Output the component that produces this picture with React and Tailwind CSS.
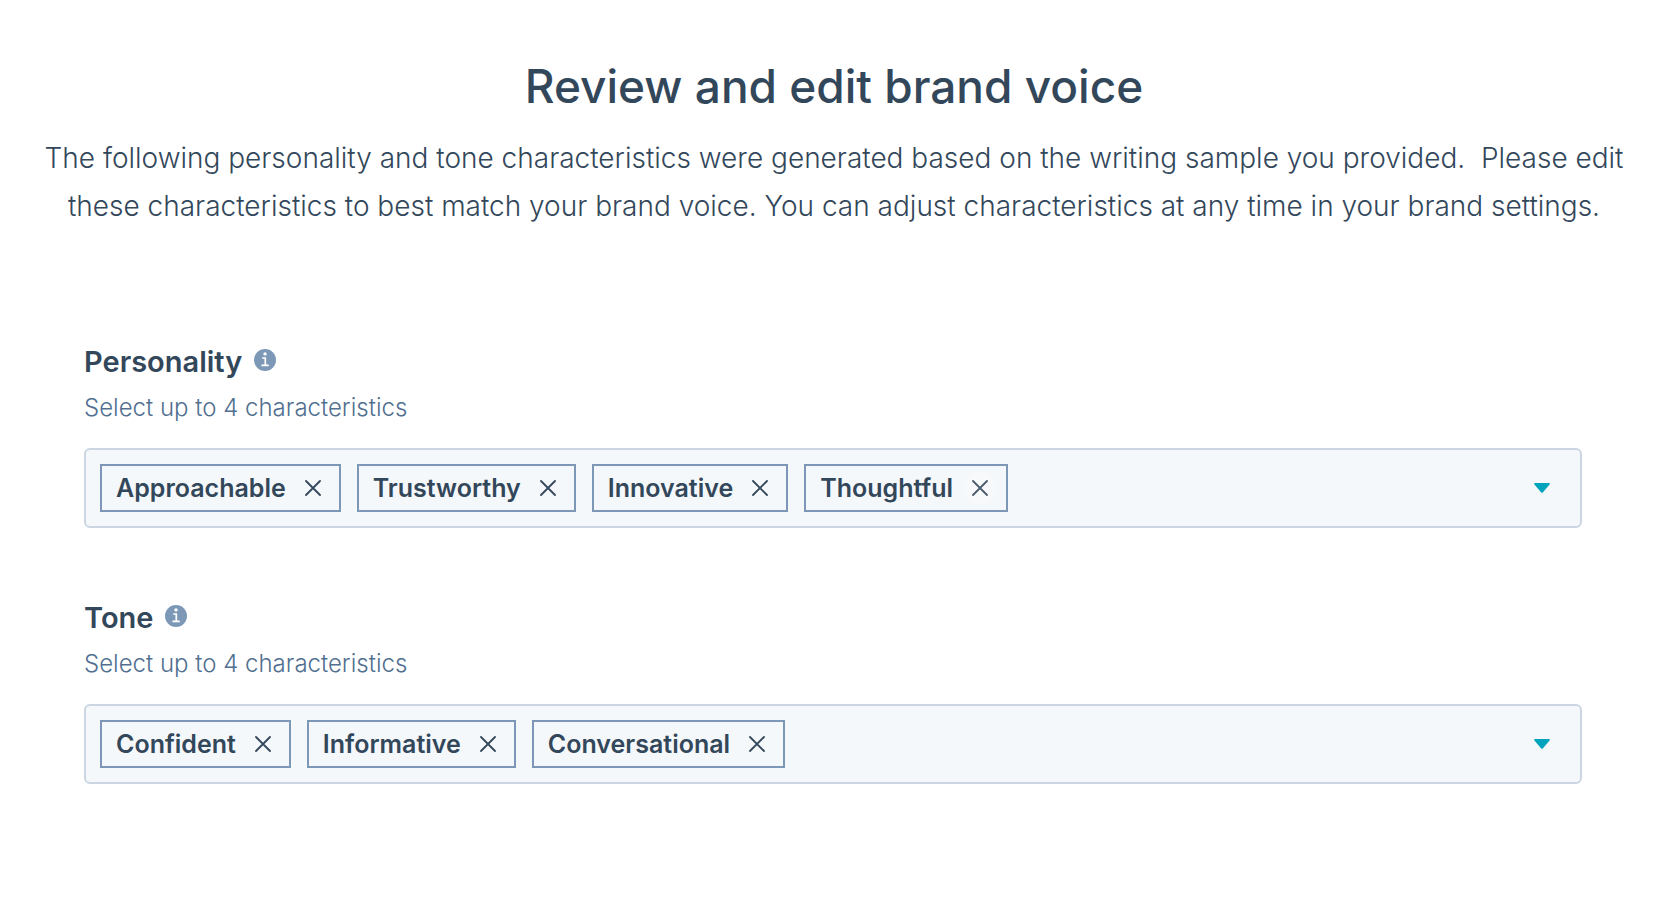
import React, { useState } from "react";

function InfoIcon() {
  return (
    <svg className="w-[22px] h-[22px]" viewBox="0 0 22 22" aria-hidden="true">
      <circle cx="11" cy="11" r="11" fill="#7c98b6" />
      <circle cx="11" cy="4.9" r="1.7" fill="#fff" />
      <path d="M8.2 9H11.3V16M7.4 16.4H14.8" fill="none" stroke="#fff" strokeWidth="1.7" />
    </svg>
  );
}

function Tag({ name, active, onRemove }) {
  return (
    <li className="flex h-12 items-center border-2 border-[#7c98b6] pl-3.5 pr-2.5">
      <span className="text-[25px] leading-8 font-semibold">{name}</span>
      <button
        type="button"
        aria-label={`Remove ${name}`}
        onClick={onRemove}
        className={`ml-[11px] flex h-8 w-8 items-center justify-center rounded-full hover:bg-[#f8f9fa] ${
          active ? "bg-[#f8f9fa] text-[#4a5c6e]" : ""
        }`}
      >
        <svg className="h-4 w-4" viewBox="0 0 16 16" fill="none" stroke="currentColor">
          <path strokeLinecap="round" strokeWidth={1.8} d="M1 1l14 14M15 1L1 15" />
        </svg>
      </button>
    </li>
  );
}

function TagSelect({ label, initial, activeTag }) {
  const [tags, setTags] = useState(initial);

  return (
    <section>
      <div className="flex items-center gap-3">
        <h2 className="text-[29px] leading-10 font-semibold">{label}</h2>
        <button type="button" aria-label={`About ${label}`} className="-mt-1">
          <InfoIcon />
        </button>
      </div>
      <p className="mt-0.5 text-2xl leading-12 font-[350] text-[#516f90]">Select up to 4 characteristics</p>

      <div className="mt-4 flex items-center justify-between rounded-md border-2 border-[#cbd6e2] bg-[#f5f8fa] p-3.5">
        <ul className="flex flex-wrap gap-4">
          {tags.map((tag) => (
            <Tag
              key={tag}
              name={tag}
              active={tag === activeTag}
              onRemove={() => setTags(tags.filter((t) => t !== tag))}
            />
          ))}
        </ul>
        <button
          type="button"
          aria-label={`Open ${label} options`}
          aria-haspopup="listbox"
          className="flex h-12 w-12 items-center justify-center"
        >
          <svg className="h-2.5 w-4" viewBox="0 0 16 10" fill="#00a4bd">
            <path d="M1 0H15Q16.4 0 15.6 1.4L9 9.2Q8 10.4 7 9.2L.4 1.4Q-.4 0 1 0Z" />
          </svg>
        </button>
      </div>
    </section>
  );
}

export default function App() {
  return (
    <main className="min-h-screen bg-white font-['Inter',sans-serif] text-[#33475b]">
      {/* Heading */}
      <header className="pt-14 pr-5 pl-4 text-center">
        <h1 className="text-[46px] leading-15 font-medium">Review and edit brand voice</h1>
        <p className="mt-[18px] text-[28px] leading-12 font-[350]">
          The following personality and tone characteristics were generated based on the writing sample you
          provided.&nbsp; Please edit <br />
          these characteristics to best match your brand voice. You can adjust characteristics at any time in your
          brand settings.
        </p>
      </header>

      {/* Characteristics */}
      <div className="mt-28 space-y-[70px] pr-[90px] pl-[84px]">
        <TagSelect
          label="Personality"
          initial={["Approachable", "Trustworthy", "Innovative", "Thoughtful"]}
          activeTag="Thoughtful"
        />
        <TagSelect label="Tone" initial={["Confident", "Informative", "Conversational"]} />
      </div>
    </main>
  );
}
